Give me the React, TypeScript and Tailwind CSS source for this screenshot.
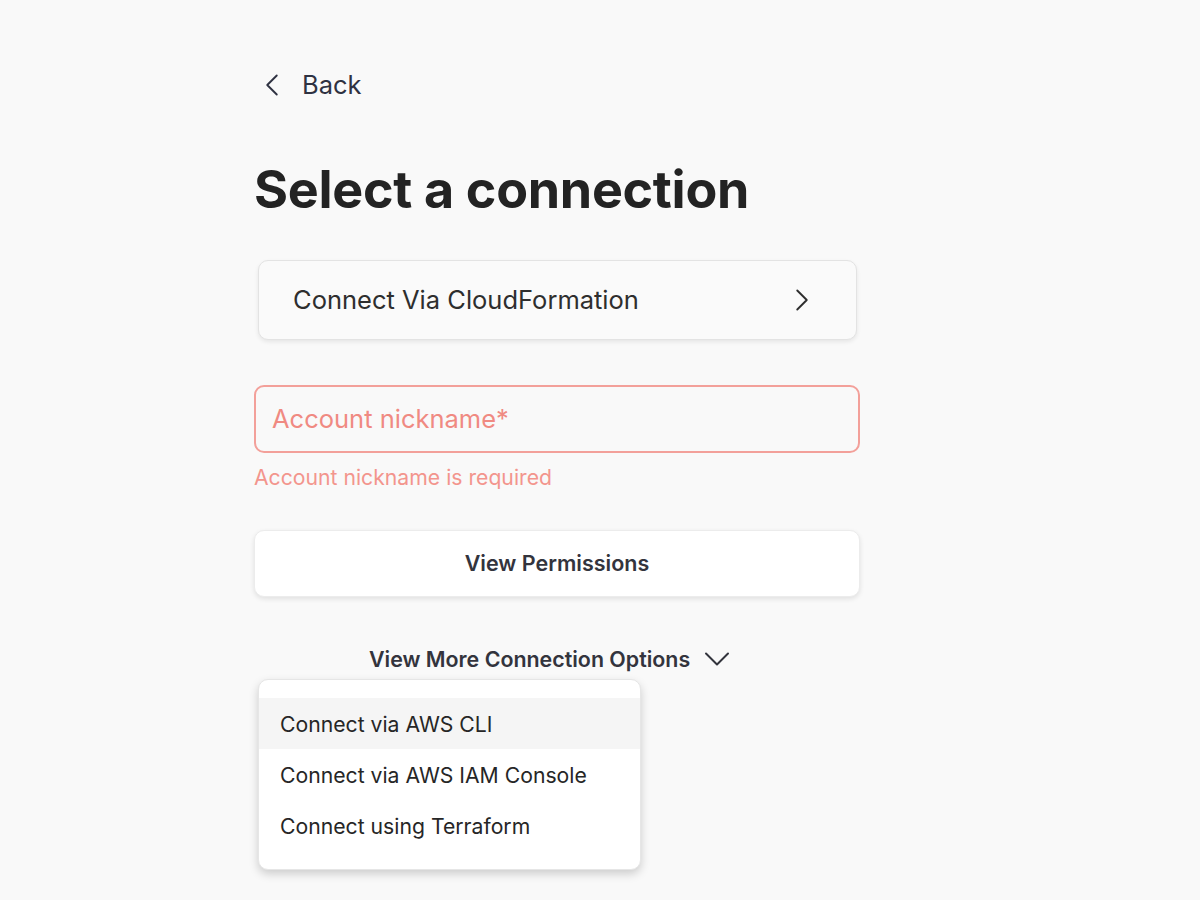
import { ChevronDown, ChevronLeft, ChevronRight } from "lucide-react";

const options = ["Connect via AWS CLI", "Connect via AWS IAM Console", "Connect using Terraform"];

export default function App() {
	return (
		<main
			className="min-h-[900px] bg-[#f9f9f9] pl-[254px] pt-[66px] text-[#2b2b2b]"
			style={{ fontFamily: "Inter, 'Noto Sans', sans-serif" }}
		>
			<div className="flex w-[606px] flex-col">
				<button className="-ml-[1px] flex h-[38px] items-center gap-[11px] self-start text-[25.5px] text-[#2f3242]">
					<ChevronLeft className="h-[38px] w-[38px]" strokeWidth={1.2} />
					<span>Back</span>
				</button>

				<h1 className="mt-[54px] text-[52px] leading-[64px] font-bold tracking-[-0.3px] text-[#232323]">
					Select a connection
				</h1>

				<button className="mt-[38px] ml-[4px] flex h-[80px] w-[599px] items-center justify-between rounded-[10px] border border-[#e3e3e3] bg-[#fafafa] pr-[35px] pl-[34px] text-[25.5px] text-[#2e2e2e] shadow-[0_2px_4px_rgba(0,0,0,0.08)]">
					<span>Connect Via CloudFormation</span>
					<ChevronRight className="h-[38px] w-[38px]" strokeWidth={1.2} />
				</button>

				<div className="mt-[45px] flex h-[68px] items-center rounded-[10px] border-2 border-[#f3a09a] px-[16px] text-[25.5px] text-[#f08a82]">
					Account nickname*
				</div>
				<p className="mt-[10px] text-[21.2px] leading-[28px] text-[#f3958d]">Account nickname is required</p>

				<button className="mt-[39px] flex h-[67px] items-center justify-center rounded-[10px] border border-[#ececec] bg-white text-[21.5px] font-semibold text-[#33343d] shadow-[0_2px_5px_rgba(0,0,0,0.1)]">
					View Permissions
				</button>

				<button className="mt-[48px] ml-[115px] flex h-[28px] items-center gap-[5px] self-start text-[21.4px] font-semibold text-[#33343d]">
					<span>View More Connection Options</span>
					<ChevronDown className="-my-[8px] h-[44px] w-[44px]" strokeWidth={1.1} />
				</button>

				<div className="mt-[6px] ml-[4px] w-[383px] rounded-[10px] border border-[#e6e6e6] bg-white pt-[18px] pb-[18px] shadow-[0_4px_10px_rgba(0,0,0,0.18)]">
					{options.map((o, i) => (
						<div
							key={o}
							className={`flex h-[51px] items-center px-[21px] pt-[3px] text-[21.2px] text-[#262626] ${i === 0 ? "bg-[#f5f5f5]" : ""}`}
						>
							{o}
						</div>
					))}
				</div>
			</div>
		</main>
	);
}
